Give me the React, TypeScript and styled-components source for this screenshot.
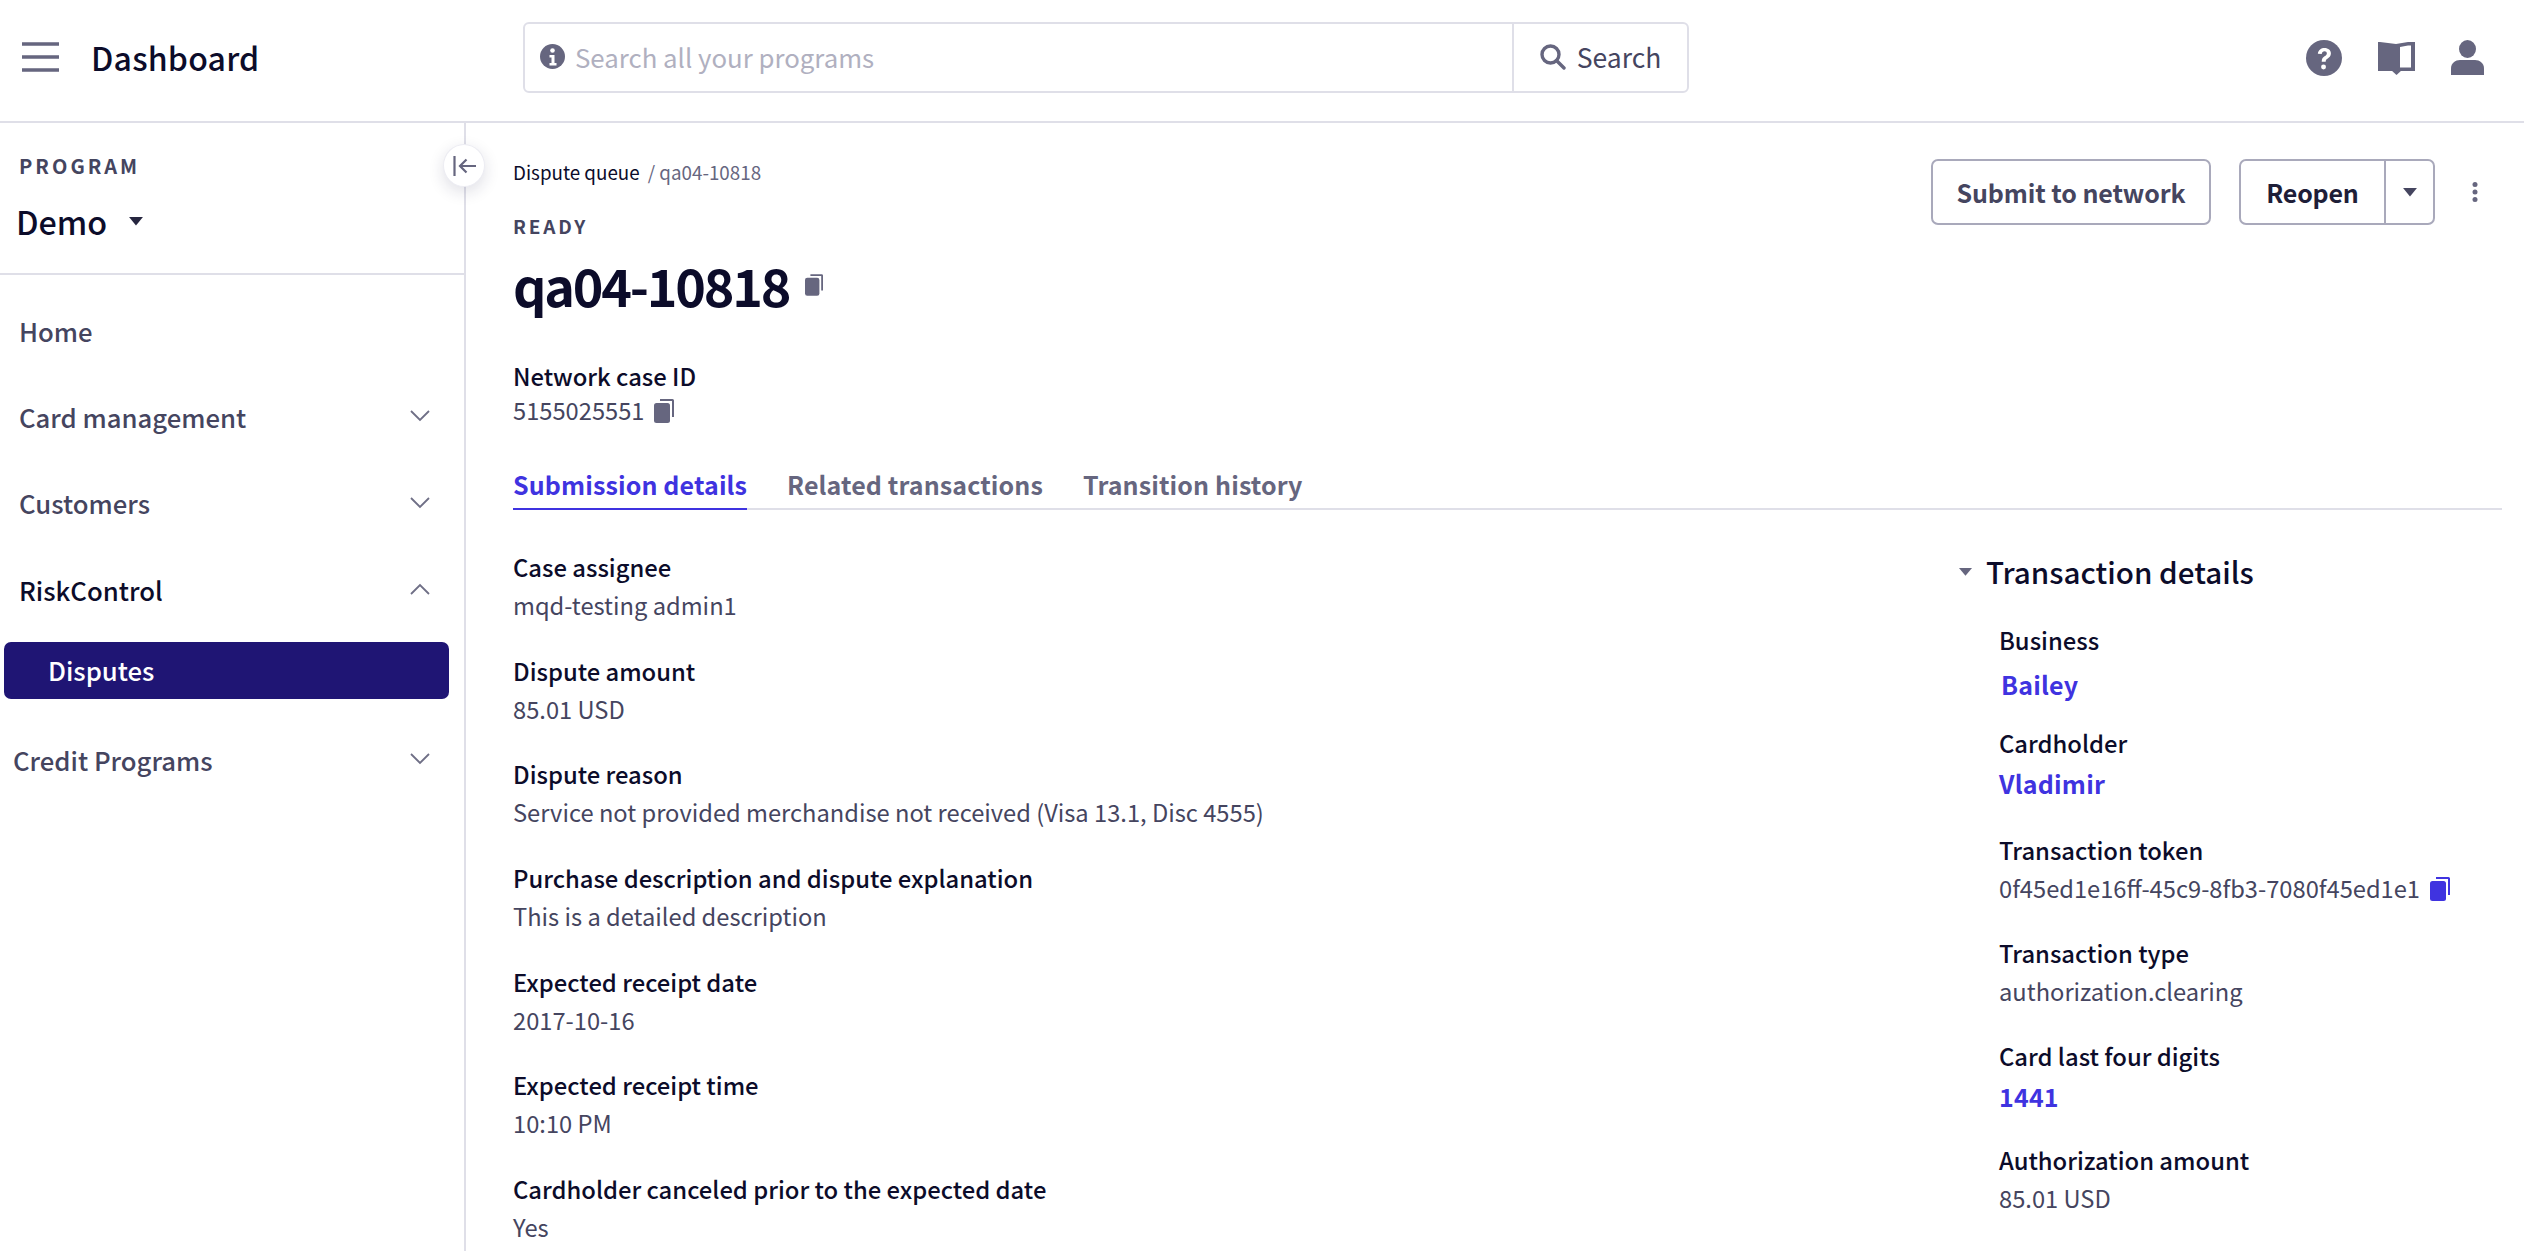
import React from "react";
import styled, { createGlobalStyle } from "styled-components";

const FONT = `"Noto Sans CJK SC", "Source Sans Pro", "Noto Sans", sans-serif`;
const INK = "#0c0c2a";
const BODY = "#45455f";
const ICON = "#66667f";
const LINK = "#3f33e0";
const LINE = "#dfdfe8";

const Global = createGlobalStyle`
  html, body { margin: 0; padding: 0; background: #fff; height: 100%; overflow: hidden; }
  body { font-family: ${FONT}; color: ${INK}; }
  #root { height: 1251px; overflow: hidden; }
  * { box-sizing: border-box; }
`;

const Page = styled.div`
  width: 2524px;
  height: 1251px;
  display: flex;
  flex-direction: column;
  overflow: hidden;
`;

const TopBar = styled.header`
  height: 123px;
  flex: none;
  display: grid;
  grid-template-columns: 523px 1166px 1fr;
  align-items: center;
  padding-bottom: 6px;
  border-bottom: 2px solid ${LINE};
`;

const Brand = styled.div`
  display: flex;
  align-items: center;
  gap: 32px;
  padding: 0 0 1px 22px;
  font-size: 32px;
  font-weight: 500;
  line-height: 40px;
  letter-spacing: 0.2px;
`;

const Menu = styled.svg`
  width: 37px;
  height: 30px;
  flex: none;
`;

const SearchBox = styled.div`
  height: 71px;
  display: flex;
  border: 2px solid ${LINE};
  border-radius: 6px;
`;

const SearchField = styled.div`
  flex: 1;
  display: flex;
  align-items: center;
  gap: 10px;
  padding: 0 0 3px 15px;
  color: #b0b0c0;
  font-size: 25.8px;
`;

const SearchButton = styled.div`
  width: 175px;
  flex: none;
  display: flex;
  align-items: center;
  justify-content: center;
  gap: 11px;
  padding-bottom: 2px;
  border-left: 2px solid ${LINE};
  color: ${BODY};
  font-size: 26.5px;
`;

const TopIcons = styled.div`
  display: flex;
  justify-content: flex-end;
  align-items: center;
  gap: 36px;
  padding-right: 40px;
`;

const Body = styled.div`
  flex: 1;
  min-height: 0;
  display: flex;
  position: relative;
`;

const Side = styled.aside`
  width: 466px;
  flex: none;
  border-right: 2px solid ${LINE};
`;

const ProgramBlock = styled.div`
  height: 152px;
  padding: 30px 0 0 19px;
  border-bottom: 2px solid ${LINE};
`;

const Overline = styled.div`
  font-size: 20px;
  line-height: 26px;
  font-weight: 700;
  letter-spacing: 3px;
  color: ${BODY};
`;

const ProgramName = styled.div`
  display: flex;
  align-items: center;
  gap: 21px;
  margin: 19px 0 0 -3px;
  font-size: 32.3px;
  line-height: 46px;
  font-weight: 500;
`;

const Nav = styled.nav`
  padding-top: 13px;
`;

const NavRow = styled.div<{ $active?: boolean; $outdent?: boolean }>`
  height: 86.3px;
  display: flex;
  align-items: center;
  justify-content: space-between;
  padding: 0 34px 2px ${(p) => (p.$outdent ? 13 : 19)}px;
  font-size: 25.7px;
  font-weight: 500;
  color: ${(p) => (p.$active ? INK : BODY)};
`;

const NavPill = styled.div`
  height: 57px;
  margin: 9px 15px 18px 4px;
  padding: 0 0 3px 44px;
  display: flex;
  align-items: center;
  border-radius: 7px;
  background: #1f1574;
  color: #fff;
  font-size: 25.7px;
  font-weight: 500;
`;

const Collapse = styled.button`
  position: absolute;
  left: 443px;
  top: 21px;
  width: 42px;
  height: 43px;
  padding: 0;
  display: flex;
  align-items: center;
  justify-content: center;
  border: 1px solid #ececf2;
  border-radius: 50%;
  background: #fff;
  box-shadow: 0 5px 16px rgba(30, 30, 70, 0.14);
`;

const Main = styled.main`
  flex: 1;
  min-width: 0;
  padding: 33px 22px 0 47px;
`;

const TitleRow = styled.div`
  display: flex;
  justify-content: space-between;
  align-items: flex-start;
`;

const Crumbs = styled.div`
  font-size: 18.8px;
  line-height: 32px;
  color: ${INK};
  span { color: ${ICON}; margin-left: 4px; }
`;

const Status = styled(Overline)`
  margin-top: 25px;
  font-size: 19px;
  letter-spacing: 2.8px;
`;

const TitleText = styled.h1`
  display: flex;
  align-items: center;
  gap: 16px;
  margin: 11px 0 0;
  font-size: 52px;
  line-height: 70px;
  font-weight: 700;
  letter-spacing: -2.2px;
`;

const Actions = styled.div`
  display: flex;
  align-items: center;
  padding-top: 3px;
`;

const Button = styled.button`
  width: 280px;
  height: 66px;
  padding: 0;
  font-family: ${FONT};
  font-size: 25px;
  font-weight: 700;
  letter-spacing: -0.1px;
  color: ${BODY};
  background: #fff;
  border: 2px solid #a9a9bb;
  border-radius: 7px;
`;

const Split = styled.div`
  height: 66px;
  margin-left: 28px;
  display: flex;
  border: 2px solid #a9a9bb;
  border-radius: 7px;
`;

const SplitLabel = styled.div`
  width: 143px;
  display: flex;
  align-items: center;
  justify-content: center;
  font-size: 25px;
  font-weight: 700;
  letter-spacing: -0.2px;
  color: #1e1e38;
`;

const SplitArrow = styled.div`
  width: 49px;
  display: flex;
  align-items: center;
  justify-content: center;
  border-left: 2px solid #a9a9bb;
`;

const Kebab = styled.svg`
  width: 8px;
  height: 20px;
  margin: 0 23px 0 36px;
`;

const NetworkBlock = styled.div`
  margin-top: 36px;
`;

const Label = styled.div`
  font-size: 23.8px;
  line-height: 39px;
  font-weight: 500;
  color: ${INK};
`;

const Value = styled.div<{ $tight?: boolean }>`
  display: flex;
  align-items: center;
  gap: 10px;
  font-size: 23.7px;
  line-height: ${(p) => (p.$tight ? 31 : 39)}px;
  color: ${BODY};
`;

const Tabs = styled.div`
  margin-top: 34px;
  height: 50px;
  display: flex;
  gap: 40px;
  border-bottom: 2px solid ${LINE};
`;

const Tab = styled.div<{ $active?: boolean }>`
  height: 50px;
  line-height: 48px;
  font-size: 25px;
  font-weight: 700;
  letter-spacing: 0.12px;
  color: ${(p) => (p.$active ? LINK : ICON)};
  border-bottom: 2px solid ${(p) => (p.$active ? LINK : "transparent")};
`;

const Columns = styled.div`
  display: grid;
  grid-template-columns: 1437px 1fr;
`;

const Left = styled.div`
  padding-top: 37px;
  display: flex;
  flex-direction: column;
  gap: 25.7px;
`;

const Right = styled.div`
  padding-top: 42px;
`;

const SectionHead = styled.div`
  display: flex;
  align-items: center;
  gap: 13px;
  padding-left: 8px;
  margin-bottom: 28px;
  font-size: 29.6px;
  line-height: 40px;
  font-weight: 500;
  color: ${INK};
`;

const SideList = styled.div`
  padding-left: 49px;
`;

const SideField = styled.div<{ $gap: number }>`
  margin-bottom: ${(p) => p.$gap}px;
`;

const LinkValue = styled.div<{ $shift?: number; $drop?: number }>`
  font-size: 25px;
  line-height: 42px;
  font-weight: 700;
  letter-spacing: 0.2px;
  color: ${LINK};
  margin-left: ${(p) => p.$shift || 0}px;
  margin-top: ${(p) => p.$drop || 0}px;
`;

const Caret = ({ size = 16, color = ICON }: { size?: number; color?: string }) => (
  <svg width={size} height={size * 0.62} viewBox="0 0 16 10" fill={color}>
    <path d="M1 1h14L8 9.5z" />
  </svg>
);

const Copy = ({ w = 20, h = 24, color = ICON }: { w?: number; h?: number; color?: string }) => (
  <svg width={w} height={h} viewBox="0 0 20 24" fill={color}>
    <path d="M6 0h12.5A1.5 1.5 0 0 1 20 1.5V18h-2V2H6z" />
    <rect x="0" y="4" width="16" height="20" rx="2.5" />
  </svg>
);

const Chevron = ({ up }: { up?: boolean }) => (
  <svg width="20" height="12" viewBox="0 0 20 12" fill="none" stroke="#6f6f86" strokeWidth="1.8">
    <path d={up ? "M1 11 10 2l9 9" : "M1 1l9 9 9-9"} />
  </svg>
);

const fields = [
  ["Case assignee", "mqd-testing admin1"],
  ["Dispute amount", "85.01 USD"],
  ["Dispute reason", "Service not provided merchandise not received (Visa 13.1, Disc 4555)"],
  ["Purchase description and dispute explanation", "This is a detailed description"],
  ["Expected receipt date", "2017-10-16"],
  ["Expected receipt time", "10:10 PM"],
  ["Cardholder canceled prior to the expected date", "Yes"],
];

export default function App() {
  return (
    <Page>
      <Global />
      <TopBar>
        <Brand>
          <Menu viewBox="0 0 37 30" fill="none" stroke={ICON} strokeWidth="3.6">
            <path d="M0 2h37M0 15h37M0 28h37" />
          </Menu>
          Dashboard
        </Brand>
        <SearchBox>
          <SearchField>
            <svg width="25" height="25" viewBox="0 0 25 25">
              <circle cx="12.5" cy="12.5" r="12.5" fill={ICON} />
              <circle cx="12.5" cy="6.5" r="2.3" fill="#fff" />
              <path d="M9.5 11h5v8h2v2.500h-7V19h2v-5.500h-2z" fill="#fff" />
            </svg>
            Search all your programs
          </SearchField>
          <SearchButton>
            <svg width="26" height="26" viewBox="0 0 26 26" fill="none" stroke={ICON} strokeWidth="3.4">
              <circle cx="10.5" cy="10.5" r="8.5" />
              <path d="M16.5 16.5 24 24" strokeLinecap="round" />
            </svg>
            Search
          </SearchButton>
        </SearchBox>
        <TopIcons>
          <svg width="36" height="36" viewBox="0 0 38 38">
            <circle cx="19" cy="19" r="19" fill={ICON} />
            <path d="M12.5 14.5c.5-4 3.500-6 7-6 4 0 6.800 2.400 6.800 5.800 0 3-2 4.300-3.700 5.400-1.300.9-1.800 1.500-1.800 3.300h-4.200c0-3.200 1-4.500 3-5.800 1.500-1 2.400-1.700 2.400-3 0-1.400-1-2.200-2.500-2.200-1.600 0-2.600 1-2.900 2.800z" fill="#fff" />
            <circle cx="18.5" cy="28.5" r="2.6" fill="#fff" />
          </svg>
          <svg width="37" height="34" viewBox="0 0 37 34" fill={ICON}>
            <path d="M0 1h2l16 2v27H0z" />
            <path d="M18 3l12-2h7v29H22v-3.500h11V4.500h-3L22 6v24h-4z" />
            <path d="M13 29h11l-5.500 5z" />
          </svg>
          <svg width="33" height="35" viewBox="0 0 33 35" fill={ICON}>
            <ellipse cx="16.5" cy="9" rx="8.5" ry="9" />
            <path d="M0 35v-6.500C0 23 4.500 20 9 20h15c4.500 0 9 3 9 8.500V35z" />
          </svg>
        </TopIcons>
      </TopBar>
      <Body>
        <Side>
          <ProgramBlock>
            <Overline>PROGRAM</Overline>
            <ProgramName>
              Demo
              <Caret size={16} color="#26263f" />
            </ProgramName>
          </ProgramBlock>
          <Nav>
            <NavRow>Home</NavRow>
            <NavRow>
              Card management
              <Chevron />
            </NavRow>
            <NavRow>
              Customers
              <Chevron />
            </NavRow>
            <NavRow $active>
              RiskControl
              <Chevron up />
            </NavRow>
            <NavPill>Disputes</NavPill>
            <NavRow $outdent>
              Credit Programs
              <Chevron />
            </NavRow>
          </Nav>
        </Side>
        <Collapse aria-label="Collapse">
          <svg width="23" height="20" viewBox="0 0 23 20" fill="none" stroke={ICON} strokeWidth="2.2">
            <path d="M1.5 0v20M23 10H7M13.5 3.500 7 10l6.500 6.500" />
          </svg>
        </Collapse>
        <Main>
          <TitleRow>
            <div>
              <Crumbs>
                Dispute queue <span>/ qa04-10818</span>
              </Crumbs>
              <Status>READY</Status>
              <TitleText>
                qa04-10818
                <Copy w={18} h={22} />
              </TitleText>
            </div>
            <Actions>
              <Button>Submit to network</Button>
              <Split>
                <SplitLabel>Reopen</SplitLabel>
                <SplitArrow>
                  <Caret size={16} color="#45455f" />
                </SplitArrow>
              </Split>
              <Kebab viewBox="0 0 8 20" fill={ICON}>
                <circle cx="4" cy="2.5" r="2.5" />
                <circle cx="4" cy="10" r="2.5" />
                <circle cx="4" cy="17.5" r="2.5" />
              </Kebab>
            </Actions>
          </TitleRow>
          <NetworkBlock>
            <Label>Network case ID</Label>
            <Value $tight>
              5155025551
              <Copy />
            </Value>
          </NetworkBlock>
          <Tabs>
            <Tab $active>Submission details</Tab>
            <Tab>Related transactions</Tab>
            <Tab>Transition history</Tab>
          </Tabs>
          <Columns>
            <Left>
              {fields.map(([k, v]) => (
                <div key={k}>
                  <Label>{k}</Label>
                  <Value>{v}</Value>
                </div>
              ))}
            </Left>
            <Right>
              <SectionHead>
                <Caret size={15} />
                Transaction details
              </SectionHead>
              <SideList>
                <SideField $gap={18}>
                  <Label>Business</Label>
                  <LinkValue $shift={2} $drop={4}>Bailey</LinkValue>
                </SideField>
                <SideField $gap={26}>
                  <Label>Cardholder</Label>
                  <LinkValue>Vladimir</LinkValue>
                </SideField>
                <SideField $gap={25}>
                  <Label>Transaction token</Label>
                  <Value>
                    0f45ed1e16ff-45c9-8fb3-7080f45ed1e1
                    <Copy color={LINK} />
                  </Value>
                </SideField>
                <SideField $gap={25}>
                  <Label>Transaction type</Label>
                  <Value>authorization.clearing</Value>
                </SideField>
                <SideField $gap={23}>
                  <Label>Card last four digits</Label>
                  <LinkValue>1441</LinkValue>
                </SideField>
                <SideField $gap={25}>
                  <Label>Authorization amount</Label>
                  <Value>85.01 USD</Value>
                </SideField>
              </SideList>
            </Right>
          </Columns>
        </Main>
      </Body>
    </Page>
  );
}
